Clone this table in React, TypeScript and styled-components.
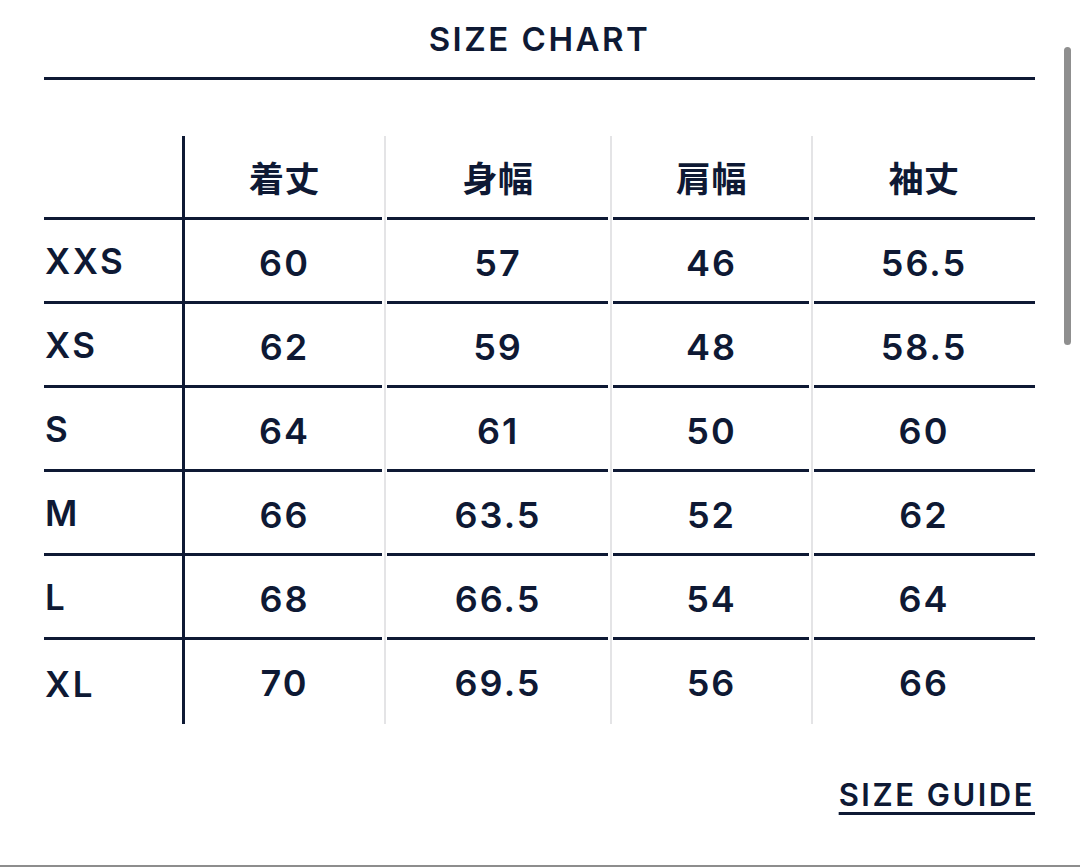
import React from 'react';
import styled, { createGlobalStyle } from 'styled-components';

const NAVY = '#0e1934';
const SOFT = '#e4e4e6';

const headers = ['着丈', '身幅', '肩幅', '袖丈'];

const rows: [string, string[]][] = [
  ['XXS', ['60', '57', '46', '56.5']],
  ['XS', ['62', '59', '48', '58.5']],
  ['S', ['64', '61', '50', '60']],
  ['M', ['66', '63.5', '52', '62']],
  ['L', ['68', '66.5', '54', '64']],
  ['XL', ['70', '69.5', '56', '66']],
];

const App = () => {
  const lastRow = rows.length - 1;

  return (
    <>
      <GlobalStyle />
      <Page>
        <Content>
          <Title>SIZE CHART</Title>
          <Rule />
          <Table>
            <SizeCell $rule>&nbsp;</SizeCell>
            {headers.map((label, i) => (
              <DataCell key={label} $divider={i > 0} $last={i === headers.length - 1} $rule>
                <HeadLabel>{label}</HeadLabel>
              </DataCell>
            ))}
            {rows.map(([size, values], r) => (
              <React.Fragment key={size}>
                <SizeCell $rule={r !== lastRow} $body>{size}</SizeCell>
                {values.map((value, i) => (
                  <DataCell
                    key={i}
                    $divider={i > 0}
                    $last={i === values.length - 1}
                    $rule={r !== lastRow}
                    $body
                  >
                    {value}
                  </DataCell>
                ))}
              </React.Fragment>
            ))}
          </Table>
          <Footer>
            <GuideLink href="#">SIZE GUIDE</GuideLink>
          </Footer>
        </Content>
        <BottomEdge />
        <ScrollThumb />
      </Page>
    </>
  );
};

const GlobalStyle = createGlobalStyle`
  * {
    margin: 0;
    padding: 0;
    box-sizing: border-box;
  }

  body {
    background: #fff;
    font-family: Inter, "Noto Sans", "Noto Sans CJK JP", sans-serif;
    color: ${NAVY};
  }
`;

const Page = styled.div`
  position: relative;
  height: 867px;
  display: flex;
  flex-direction: column;
  overflow: hidden;
`;

const Content = styled.main`
  display: flex;
  flex-direction: column;
  padding: 19px 45px 0 44px;
`;

const Title = styled.h1`
  font-size: 33px;
  line-height: 40px;
  font-weight: 600;
  letter-spacing: 2.5px;
  text-align: center;
`;

const Rule = styled.hr`
  border: 0;
  height: 3px;
  margin-top: 18px;
  background: ${NAVY};
`;

const Table = styled.div`
  display: grid;
  grid-template-columns: 141px 199px 226px 201px 224px;
  grid-auto-rows: 84px;
  margin-top: 56px;
`;

// body rows sit a touch lower in their cells than the header row
const SizeCell = styled.div<{ $rule?: boolean; $body?: boolean }>`
  display: flex;
  align-items: center;
  padding: ${({ $body }) => ($body ? '4px' : '0')} 0 ${({ $rule }) => ($rule ? '3px' : '0')} 1px;
  border-right: 3px solid ${NAVY};
  border-bottom: ${({ $rule }) => ($rule ? `3px solid ${NAVY}` : 'none')};
  font-size: 35px;
  font-weight: 600;
  letter-spacing: 2.5px;
`;

const DataCell = styled.div<{ $divider?: boolean; $last?: boolean; $rule?: boolean; $body?: boolean }>`
  display: flex;
  align-items: center;
  justify-content: center;
  padding: ${({ $body }) => ($body ? '4px' : '0')} 0 3px;
  border-left: ${({ $divider }) => ($divider ? `2px solid ${SOFT}` : 'none')};
  background-image: ${({ $rule }) => ($rule ? `linear-gradient(${NAVY}, ${NAVY})` : 'none')};
  background-repeat: no-repeat;
  background-position: ${({ $divider }) => ($divider ? '1px' : '0')} 100%;
  background-size: calc(100% - ${({ $divider, $last }) => ($divider ? 1 : 0) + ($last ? 0 : 2)}px) 3px;
  font-size: 36px;
  font-weight: 600;
  letter-spacing: 2px;
`;

const HeadLabel = styled.span`
  font-family: "Noto Sans CJK JP", sans-serif;
  font-weight: 700;
  font-size: 35px;
  letter-spacing: 0.5px;
`;

const Footer = styled.div`
  display: flex;
  justify-content: flex-end;
  margin-top: 52px;
`;

const GuideLink = styled.a`
  color: ${NAVY};
  font-size: 31px;
  line-height: 38px;
  font-weight: 600;
  letter-spacing: 2.5px;
  text-decoration: underline;
  text-decoration-thickness: 3px;
  text-underline-offset: 6px;
`;

const BottomEdge = styled.div`
  margin-top: auto;
  height: 2px;
  background: #8d8d8d;
`;

const ScrollThumb = styled.div`
  position: absolute;
  top: 47px;
  left: 1064px;
  width: 7px;
  height: 298px;
  border-radius: 4px;
  background: #8f8f8f;
`;

export default App;
